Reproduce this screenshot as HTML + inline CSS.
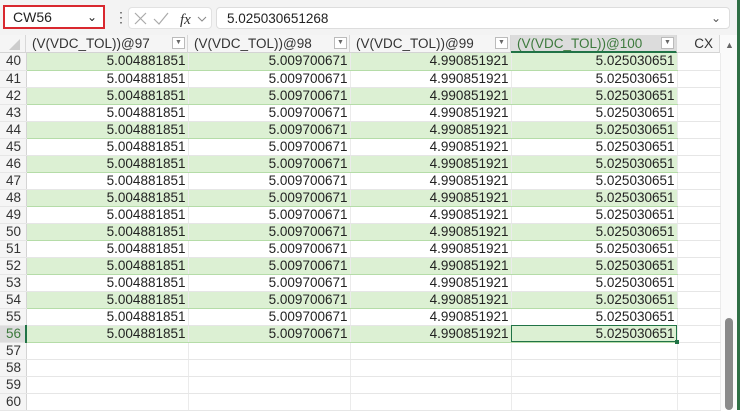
<!DOCTYPE html><html><head><style>
body{margin:0;width:740px;height:410px;overflow:hidden;background:#fff;font-family:"Liberation Sans",Arial,sans-serif;position:relative}
.top{position:absolute;left:0;top:0;width:740px;height:35px;background:#f3f3f3}
.nb{position:absolute;left:3px;top:5px;width:102px;height:24px;border:2px solid #d9282f;background:#fff;box-sizing:border-box;font-size:14px;line-height:20px;padding-left:8px;color:#222}
.fb{position:absolute;left:216px;top:7px;width:514px;height:22px;background:#fff;border:1px solid #ddd;border-radius:4px;font-size:13.5px;line-height:21px;padding-left:10px;box-sizing:border-box;color:#222}
.ic{position:absolute;left:128px;top:7px;width:84px;height:22px;background:#fff;border:1px solid #e2e2e2;border-radius:4px;box-sizing:border-box}
.hdr{position:absolute;top:35px;height:18px;background:#f5f5f5;border-bottom:1px solid #d4d4d4;box-sizing:border-box;font-size:13.5px;line-height:17px;color:#333;padding-left:6px;border-right:1px solid #d8d8d8}
.dd{position:absolute;right:2px;top:2px;width:13px;height:12px;border:1px solid #bbb;background:#fff;box-sizing:border-box;font-size:7px;line-height:10px;text-align:center;color:#666}
table{position:absolute;left:0;top:53px;border-collapse:collapse;table-layout:fixed}
td{height:17px;padding:0 2px 0 0;box-sizing:border-box;border-right:1px solid #ebebeb;border-bottom:1px solid #e6e6e6;font-size:13.5px;line-height:16px;text-align:right;color:#222;overflow:hidden;white-space:nowrap}
td.r{text-align:left;padding-left:6px;background:#f5f5f5;color:#333;border-right:1px solid #d4d4d4}
tr.g td.c{background:#dcf0d3;border-bottom:1px solid #b5dca8}
</style></head><body>
<div class="top"></div>
<div class="nb">CW56<span style="position:absolute;right:6px;top:0;font-size:12px">&#8964;</span></div>
<div style="position:absolute;left:114px;top:9px;font-size:14px;color:#555">&#8942;</div>
<div class="ic"><svg width="84" height="22"><path d="M6 5l11 11M17 5L6 16" stroke="#aaa" stroke-width="1.2" fill="none"/><path d="M25 11l5 5 9-11" stroke="#aaa" stroke-width="1.2" fill="none"/><text x="51" y="16" font-family="Liberation Serif" font-style="italic" font-size="15" fill="#333">fx</text><path d="M69 9l4 4 4-4" stroke="#888" fill="none"/></svg></div>
<div class="fb">5.025030651268<span style="position:absolute;right:8px;top:0;font-size:12px;color:#555">&#8964;</span></div>
<div class="hdr" style="left:0;width:26px;padding:0"><svg width="26" height="17"><path d="M20 4L20 15L9 15Z" fill="#ccc"/></svg></div>
<div class="hdr" style="left:26px;width:162px">(V(VDC_TOL))@97<div class="dd">&#9660;</div></div>
<div class="hdr" style="left:188px;width:162px">(V(VDC_TOL))@98<div class="dd">&#9660;</div></div>
<div class="hdr" style="left:350px;width:161px">(V(VDC_TOL))@99<div class="dd">&#9660;</div></div>
<div class="hdr" style="left:511px;width:166px;background:#dcdcdc;color:#3d7a3d;border-bottom:2px solid #217346">(V(VDC_TOL))@100<div class="dd">&#9660;</div></div>
<div class="hdr" style="left:677px;width:43px;text-align:right;padding-right:6px">CX</div>
<div style="position:absolute;left:720px;top:35px;width:20px;height:375px;background:#fafafa"></div>
<div style="position:absolute;left:725px;top:40px;font-size:9px;color:#666">&#9650;</div>
<div style="position:absolute;left:725px;top:318px;width:8px;height:92px;background:#8a8a8a;border-radius:4px"></div>
<div style="position:absolute;left:737px;top:0;width:3px;height:410px;background:#2f6f45"></div>
<table>
<colgroup><col style="width:26px"><col style="width:162px"><col style="width:162px"><col style="width:161px"><col style="width:166px"><col style="width:43px"></colgroup>
<tr class="g"><td class="r">40</td><td class="c">5.004881851</td><td class="c">5.009700671</td><td class="c">4.990851921</td><td class="c">5.025030651</td><td></td></tr>
<tr><td class="r">41</td><td class="c">5.004881851</td><td class="c">5.009700671</td><td class="c">4.990851921</td><td class="c">5.025030651</td><td></td></tr>
<tr class="g"><td class="r">42</td><td class="c">5.004881851</td><td class="c">5.009700671</td><td class="c">4.990851921</td><td class="c">5.025030651</td><td></td></tr>
<tr><td class="r">43</td><td class="c">5.004881851</td><td class="c">5.009700671</td><td class="c">4.990851921</td><td class="c">5.025030651</td><td></td></tr>
<tr class="g"><td class="r">44</td><td class="c">5.004881851</td><td class="c">5.009700671</td><td class="c">4.990851921</td><td class="c">5.025030651</td><td></td></tr>
<tr><td class="r">45</td><td class="c">5.004881851</td><td class="c">5.009700671</td><td class="c">4.990851921</td><td class="c">5.025030651</td><td></td></tr>
<tr class="g"><td class="r">46</td><td class="c">5.004881851</td><td class="c">5.009700671</td><td class="c">4.990851921</td><td class="c">5.025030651</td><td></td></tr>
<tr><td class="r">47</td><td class="c">5.004881851</td><td class="c">5.009700671</td><td class="c">4.990851921</td><td class="c">5.025030651</td><td></td></tr>
<tr class="g"><td class="r">48</td><td class="c">5.004881851</td><td class="c">5.009700671</td><td class="c">4.990851921</td><td class="c">5.025030651</td><td></td></tr>
<tr><td class="r">49</td><td class="c">5.004881851</td><td class="c">5.009700671</td><td class="c">4.990851921</td><td class="c">5.025030651</td><td></td></tr>
<tr class="g"><td class="r">50</td><td class="c">5.004881851</td><td class="c">5.009700671</td><td class="c">4.990851921</td><td class="c">5.025030651</td><td></td></tr>
<tr><td class="r">51</td><td class="c">5.004881851</td><td class="c">5.009700671</td><td class="c">4.990851921</td><td class="c">5.025030651</td><td></td></tr>
<tr class="g"><td class="r">52</td><td class="c">5.004881851</td><td class="c">5.009700671</td><td class="c">4.990851921</td><td class="c">5.025030651</td><td></td></tr>
<tr><td class="r">53</td><td class="c">5.004881851</td><td class="c">5.009700671</td><td class="c">4.990851921</td><td class="c">5.025030651</td><td></td></tr>
<tr class="g"><td class="r">54</td><td class="c">5.004881851</td><td class="c">5.009700671</td><td class="c">4.990851921</td><td class="c">5.025030651</td><td></td></tr>
<tr><td class="r">55</td><td class="c">5.004881851</td><td class="c">5.009700671</td><td class="c">4.990851921</td><td class="c">5.025030651</td><td></td></tr>
<tr class="g"><td class="r" style="background:#dcdcdc;color:#3d7a3d;border-right:2px solid #217346">56</td><td class="c">5.004881851</td><td class="c">5.009700671</td><td class="c">4.990851921</td><td class="c" style="outline:1px solid #217346;outline-offset:-1px">5.025030651</td><td></td></tr>
<tr><td class="r">57</td><td></td><td></td><td></td><td></td><td></td></tr>
<tr><td class="r">58</td><td></td><td></td><td></td><td></td><td></td></tr>
<tr><td class="r">59</td><td></td><td></td><td></td><td></td><td></td></tr>
<tr><td class="r">60</td><td></td><td></td><td></td><td></td><td></td></tr>
</table>
<div style="position:absolute;left:675px;top:340px;width:4px;height:4px;background:#217346"></div>
</body></html>
